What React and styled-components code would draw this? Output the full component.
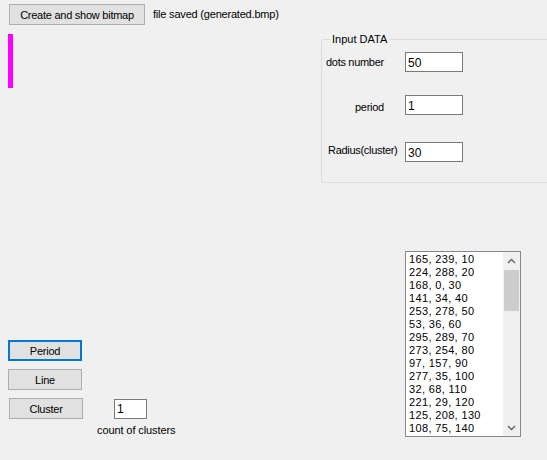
import React from "react";
import styled, { createGlobalStyle } from "styled-components";

const points = [
    "165, 239, 10", "224, 288, 20", "168, 0, 30", "141, 34, 40",
    "253, 278, 50", "53, 36, 60", "295, 289, 70", "273, 254, 80",
    "97, 157, 90", "277, 35, 100", "32, 68, 110", "221, 29, 120",
    "125, 208, 130", "108, 75, 140",
];

//Form
const App = () => {
    return (
        <>
            <GlobalStyle />
            <Form>
                <TopRow>
                    <WinButton width={136}>Create and show bitmap</WinButton>
                    <Label>file saved (generated.bmp)</Label>
                </TopRow>
                <Body>
                    <LeftPanel>
                        <PinkBar />
                        <ButtonStack>
                            <WinButton width={74} focused>Period</WinButton>
                            <WinButton width={74}>Line</WinButton>
                            <ClusterRow>
                                <WinButton width={74}>Cluster</WinButton>
                                <TextBox width={33} value="1" readOnly />
                            </ClusterRow>
                            <CountLabel>count of clusters</CountLabel>
                        </ButtonStack>
                    </LeftPanel>
                    <RightPanel>
                        <GroupBox>
                            <Legend>Input DATA</Legend>
                            <FieldRow top={6}>
                                <FieldLabel indent={2} shift={0}>dots number</FieldLabel>
                                <TextBox width={58} value="50" readOnly />
                            </FieldRow>
                            <FieldRow top={23}>
                                <FieldLabel indent={31} shift={2}>period</FieldLabel>
                                <TextBox width={58} value="1" readOnly />
                            </FieldRow>
                            <FieldRow top={27}>
                                <FieldLabel indent={4} shift={-2}>Radius(cluster)</FieldLabel>
                                <TextBox width={58} value="30" readOnly />
                            </FieldRow>
                        </GroupBox>
                        <ListBox>
                            <Items>
                                {points.map((p) => <Item key={p}>{p}</Item>)}
                            </Items>
                            <ScrollBar>
                                <Arrow>
                                    <svg width="9" height="6" viewBox="0 0 9 6">
                                        <path d="M1 5 L4.5 1.5 L8 5" fill="none" stroke="#606060" strokeWidth="1.3" />
                                    </svg>
                                </Arrow>
                                <Track>
                                    <Thumb />
                                </Track>
                                <Arrow>
                                    <svg width="9" height="6" viewBox="0 0 9 6">
                                        <path d="M1 1 L4.5 4.5 L8 1" fill="none" stroke="#606060" strokeWidth="1.3" />
                                    </svg>
                                </Arrow>
                            </ScrollBar>
                        </ListBox>
                    </RightPanel>
                </Body>
            </Form>
        </>
    );
};

export default App;

const GlobalStyle = createGlobalStyle`
    html, body {
        margin: 0;
        padding: 0;
        background: #f0f0f0;
    }
    body {
        font-family: "Liberation Sans", Arial, sans-serif;
        font-size: 11px;
        color: #000;
    }
`;

const Form = styled.div`
    width: 547px;
    height: 460px;
    overflow: hidden;
    background: #f0f0f0;
    display: flex;
    flex-direction: column;
`;

const TopRow = styled.div`
    display: flex;
    align-items: center;
    gap: 8px;
    padding: 4px 0 0 9px;
`;

const Label = styled.span`
    letter-spacing: -0.2px;
    line-height: 13px;
`;

const WinButton = styled.div`
    box-sizing: border-box;
    width: ${(p) => p.width}px;
    height: 21px;
    display: flex;
    align-items: center;
    justify-content: center;
    background: #e1e1e1;
    border: ${(p) => (p.focused ? "2px solid #0078d7" : "1px solid #adadad")};
    letter-spacing: -0.25px;
    white-space: nowrap;
`;

const Body = styled.div`
    display: flex;
    padding-top: 7px;
`;

const LeftPanel = styled.div`
    flex-shrink: 0;
    width: 313px;
    padding-left: 8px;
    display: flex;
    flex-direction: column;
`;

const PinkBar = styled.div`
    width: 5px;
    height: 54px;
    margin-top: 2px;
    background: #ff00ff;
`;

const ButtonStack = styled.div`
    display: flex;
    flex-direction: column;
    gap: 8px;
    margin-top: 252px;
`;

const ClusterRow = styled.div`
    display: flex;
    align-items: center;
    gap: 31px;
    margin-left: 1px;
`;

const CountLabel = styled.span`
    margin: -3px 0 0 89px;
    letter-spacing: -0.1px;
`;

const TextBox = styled.input`
    box-sizing: border-box;
    width: ${(p) => p.width}px;
    height: 20px;
    margin: 0;
    padding: 1px 2px 0;
    border: 1px solid #7a7a7a;
    background: #fff;
    font: 12px "Liberation Sans", Arial, sans-serif;
    color: #000;
    outline: none;
`;

const RightPanel = styled.div`
    flex-shrink: 0;
    display: flex;
    flex-direction: column;
`;

const GroupBox = styled.fieldset`
    box-sizing: border-box;
    width: 250px;
    height: 151px;
    margin: 0;
    padding: 0 0 0 2px;
    border: 1px solid #dcdcdc;
    border-radius: 2px;
`;

const Legend = styled.legend`
    margin-left: 6px;
    padding: 0 2px;
    line-height: 14px;
`;

const FieldRow = styled.div`
    display: grid;
    grid-template-columns: 81px 58px;
    align-items: center;
    margin-top: ${(p) => p.top}px;
`;

const FieldLabel = styled.span`
    padding-left: ${(p) => p.indent}px;
    position: relative;
    top: ${(p) => p.shift}px;
    letter-spacing: -0.3px;
    white-space: nowrap;
`;

const ListBox = styled.div`
    box-sizing: border-box;
    display: flex;
    width: 116px;
    height: 186px;
    margin: 68px 0 0 84px;
    border: 1px solid #828790;
    background: #fff;
`;

const Items = styled.div`
    flex: 1;
    overflow: hidden;
    padding: 1px 0 0 3px;
`;

const Item = styled.div`
    height: 13px;
    line-height: 13px;
    letter-spacing: 0.35px;
    white-space: nowrap;
`;

const ScrollBar = styled.div`
    width: 17px;
    display: flex;
    flex-direction: column;
    background: #f0f0f0;
`;

const Arrow = styled.div`
    height: 17px;
    display: flex;
    align-items: center;
    justify-content: center;
`;

const Track = styled.div`
    flex: 1;
    padding: 1px 1px 0;
`;

const Thumb = styled.div`
    height: 41px;
    background: #cdcdcd;
`;
